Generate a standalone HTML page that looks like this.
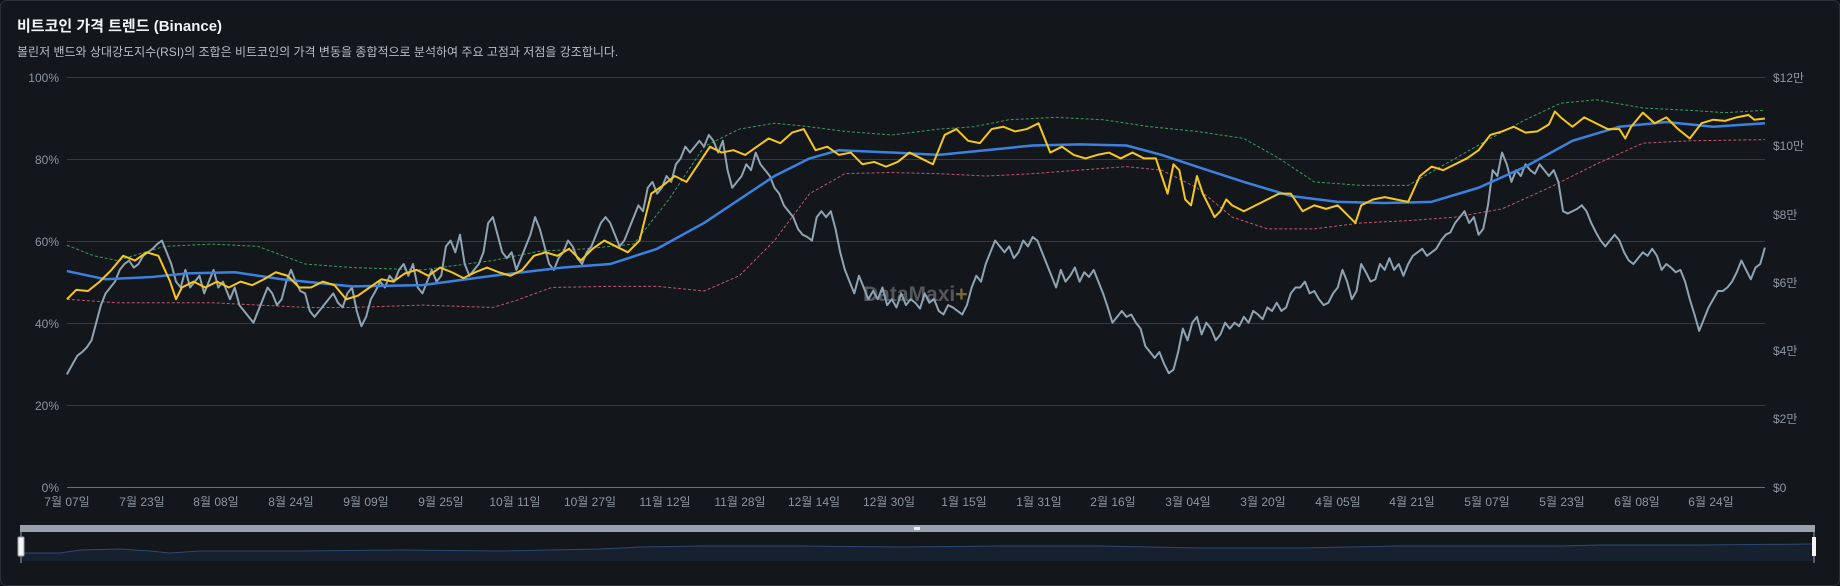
<!DOCTYPE html>
<html><head><meta charset="utf-8"><style>
html,body{margin:0;padding:0;background:#0d1014;width:1840px;height:586px;overflow:hidden}
.card{position:absolute;left:0;top:0;width:1838px;height:584px;border:1px solid #2b3038;border-radius:6px;background:#13161b}
svg{position:absolute;left:0;top:0}
text{font-family:"Liberation Sans","Noto Sans CJK KR",sans-serif}
</style></head><body>
<div class="card"></div>
<svg width="1840" height="586" viewBox="0 0 1840 586">
<text x="17" y="31" font-size="15" font-weight="bold" fill="#f2f4f6">비트코인 가격 트렌드 (Binance)</text>
<text x="17" y="56" font-size="12" fill="#b8bec6">볼린저 밴드와 상대강도지수(RSI)의 조합은 비트코인의 가격 변동을 종합적으로 분석하여 주요 고점과 저점을 강조합니다.</text>
<g stroke="#363b43" stroke-width="1">
<line x1="67" y1="77.5" x2="1765" y2="77.5"/>
<line x1="67" y1="159.5" x2="1765" y2="159.5"/>
<line x1="67" y1="241.5" x2="1765" y2="241.5"/>
<line x1="67" y1="323.5" x2="1765" y2="323.5"/>
<line x1="67" y1="405.5" x2="1765" y2="405.5"/>
<line x1="67" y1="487.5" x2="1765" y2="487.5" stroke="#6b7079"/>
</g>
<g font-size="12" fill="#8d96a0" text-anchor="end">
<text x="59" y="82">100%</text><text x="59" y="164">80%</text><text x="59" y="246">60%</text><text x="59" y="328">40%</text><text x="59" y="410">20%</text><text x="59" y="492">0%</text>
</g>
<g font-size="12" fill="#8d96a0">
<text x="1773" y="82">$12만</text><text x="1773" y="150">$10만</text><text x="1773" y="219">$8만</text><text x="1773" y="287">$6만</text><text x="1773" y="355">$4만</text><text x="1773" y="423">$2만</text><text x="1773" y="492">$0</text>
</g>
<g font-size="12" fill="#8d96a0" text-anchor="middle">
<text x="67" y="506">7월 07일</text><text x="142" y="506">7월 23일</text><text x="216" y="506">8월 08일</text><text x="291" y="506">8월 24일</text><text x="366" y="506">9월 09일</text><text x="441" y="506">9월 25일</text><text x="515" y="506">10월 11일</text><text x="590" y="506">10월 27일</text><text x="665" y="506">11월 12일</text><text x="740" y="506">11월 28일</text><text x="814" y="506">12월 14일</text><text x="889" y="506">12월 30일</text><text x="964" y="506">1월 15일</text><text x="1039" y="506">1월 31일</text><text x="1113" y="506">2월 16일</text><text x="1188" y="506">3월 04일</text><text x="1263" y="506">3월 20일</text><text x="1338" y="506">4월 05일</text><text x="1412" y="506">4월 21일</text><text x="1487" y="506">5월 07일</text><text x="1562" y="506">5월 23일</text><text x="1637" y="506">6월 08일</text><text x="1711" y="506">6월 24일</text>
</g>
<text x="863" y="301" font-size="21" font-weight="bold" fill="#5f6369" opacity="0.85">DataMaxi<tspan fill="#8a7a3a">+</tspan></text>
<g transform="scale(1.17347)" fill="none" stroke-linejoin="round">
<polyline vector-effect="non-scaling-stroke" stroke="#3d9a5a" stroke-width="1" stroke-dasharray="3,2" points="57,209 80,218 100,222 140,210 180,208 220,210 260,225 300,228 360,230 420,222 460,214 500,212 540,208 570,170 600,125 630,110 660,105 690,108 720,112 760,115 800,110 830,108 860,102 900,100 940,102 980,108 1020,112 1060,118 1090,135 1120,155 1160,158 1200,158 1240,135 1270,118 1300,102 1330,88 1360,85 1400,92 1440,94 1470,96 1504,94"/>
<polyline vector-effect="non-scaling-stroke" stroke="#c0566a" stroke-width="1" stroke-dasharray="3,2" points="57,255 100,258 140,258 180,258 220,260 260,262 300,262 360,260 420,262 440,256 470,245 520,244 560,244 600,248 630,235 660,205 690,165 720,148 760,147 800,148 840,150 880,148 920,145 960,142 990,145 1020,160 1050,185 1080,195 1120,195 1160,190 1200,188 1240,185 1280,178 1320,160 1360,140 1400,122 1440,120 1504,119"/>
<polyline vector-effect="non-scaling-stroke" stroke="#8fa3b3" stroke-width="2" points="57,319 62,310 66,303 70,300 74,296 78,290 82,275 86,260 90,250 94,245 98,240 102,230 106,225 110,222 114,228 118,225 122,218 126,215 130,212 134,208 138,205 142,215 146,225 150,240 154,245 158,230 162,245 166,240 170,235 174,250 178,240 182,230 186,245 190,240 196,255 200,245 204,260 208,265 212,270 216,275 220,265 224,255 228,245 232,250 236,260 240,255 244,240 248,230 252,240 256,248 260,250 264,265 268,270 272,265 276,260 280,255 284,250 288,258 292,262 296,250 300,245 304,265 308,278 312,270 316,255 320,248 324,240 328,245 332,235 336,240 340,230 344,225 348,235 352,225 356,245 360,250 364,240 368,230 372,240 376,235 380,210 384,205 388,215 392,200 396,225 400,235 404,230 408,225 412,215 416,190 420,185 424,200 428,215 432,220 436,215 440,230 444,220 448,210 452,200 456,185 460,195 464,210 468,225 472,230 476,220 480,215 484,205 488,210 492,220 496,225 500,215 504,210 508,200 512,190 516,185 520,190 524,200 528,210 532,205 536,195 540,185 544,175 548,180 552,160 556,155 560,165 564,160 568,150 572,155 576,140 580,135 584,125 588,130 592,125 596,120 600,125 604,115 608,120 612,130 616,120 620,145 624,160 628,155 632,150 636,140 640,145 644,130 648,140 652,145 656,150 660,160 664,165 668,175 672,180 676,185 680,195 684,200 688,202 692,205 696,185 700,180 704,185 708,180 712,195 716,215 720,230 724,240 728,250 732,235 736,245 740,255 744,248 748,255 752,245 756,260 760,255 764,262 768,250 772,260 776,255 780,258 784,263 788,250 792,258 796,255 800,265 804,268 808,260 812,262 816,265 820,268 824,260 828,245 832,235 836,240 840,225 844,215 848,205 852,210 856,215 860,210 864,220 868,215 872,205 876,210 880,202 884,205 888,215 892,225 896,235 900,245 904,230 908,240 912,235 916,228 920,240 924,232 928,236 932,230 936,240 940,250 944,262 948,275 952,270 956,265 960,270 964,268 968,275 972,280 976,295 980,300 984,305 988,300 992,310 996,318 1000,315 1004,300 1008,280 1012,290 1016,275 1020,270 1024,285 1028,275 1032,280 1036,290 1040,285 1044,275 1048,280 1052,275 1056,278 1060,270 1064,275 1068,265 1072,268 1076,272 1080,262 1084,265 1088,258 1092,265 1096,262 1100,250 1104,245 1108,245 1112,240 1116,250 1120,248 1124,255 1128,260 1132,258 1136,250 1140,245 1144,230 1148,240 1152,255 1156,248 1160,225 1164,232 1168,240 1172,238 1176,225 1180,230 1184,220 1188,230 1192,225 1196,235 1200,225 1204,218 1208,215 1212,212 1216,218 1220,215 1224,212 1228,205 1232,200 1236,198 1240,190 1244,185 1248,180 1252,190 1256,185 1260,200 1264,195 1268,175 1272,145 1276,150 1280,130 1284,140 1288,155 1292,145 1296,150 1300,140 1304,145 1308,148 1312,140 1316,145 1320,150 1324,145 1328,155 1332,180 1336,182 1340,180 1344,178 1348,175 1352,180 1356,190 1360,198 1364,205 1368,210 1372,205 1376,200 1380,205 1384,215 1388,222 1392,225 1396,220 1400,215 1404,218 1408,212 1412,218 1416,230 1420,225 1424,228 1428,232 1432,230 1436,240 1440,255 1444,268 1448,282 1452,272 1456,262 1460,255 1464,248 1468,248 1472,245 1476,240 1480,232 1484,222 1488,230 1492,238 1496,228 1500,225 1504,211"/>
<polyline vector-effect="non-scaling-stroke" stroke="#3b82e0" stroke-width="2.5" points="57,231 90,238 130,236 160,233 200,232 240,238 300,244 360,243 420,235 480,228 520,225 560,212 600,190 630,170 660,150 690,135 715,128 760,130 800,132 840,128 880,124 920,123 960,124 990,132 1020,142 1060,155 1100,167 1140,172 1180,173 1220,172 1260,160 1300,142 1340,120 1380,108 1420,104 1460,108 1504,105"/>
<polyline vector-effect="non-scaling-stroke" stroke="#f5c81e" stroke-width="2" points="57,255 65,247 75,248 85,240 95,230 105,218 115,222 125,215 135,218 145,240 150,255 155,245 165,240 175,245 185,240 195,245 205,240 215,243 225,238 235,232 245,235 255,245 265,245 275,240 285,243 295,255 305,252 315,245 325,238 335,240 345,233 355,230 365,235 375,228 385,232 395,237 405,232 415,228 425,232 435,235 445,230 455,218 465,215 475,218 485,212 495,222 505,212 515,205 525,210 535,215 545,205 555,165 565,158 575,150 585,155 595,140 605,125 615,130 625,128 635,132 645,125 655,118 665,122 675,113 685,110 695,128 705,125 715,132 725,130 735,140 745,138 755,142 765,138 775,130 785,135 795,140 805,115 815,110 825,120 835,122 845,110 855,108 865,112 875,110 885,105 895,130 905,125 915,132 925,135 935,132 945,130 955,135 965,130 975,135 985,135 990,150 995,165 1000,140 1005,145 1010,170 1015,175 1020,150 1025,165 1030,175 1035,185 1040,180 1045,170 1050,175 1060,180 1070,175 1080,170 1090,165 1100,165 1110,180 1120,175 1130,178 1140,175 1150,185 1155,190 1160,175 1170,170 1180,168 1190,170 1200,172 1210,150 1220,142 1230,145 1240,140 1250,135 1260,128 1270,115 1280,112 1290,108 1300,113 1310,112 1320,106 1325,95 1330,100 1340,108 1350,100 1360,105 1370,110 1380,110 1385,118 1390,108 1400,96 1410,105 1420,100 1430,110 1440,118 1450,105 1460,102 1470,103 1480,100 1490,98 1495,102 1504,101"/>
</g>
<rect x="20" y="525" width="1795" height="7" fill="#9aa1ae"/>
<rect x="914" y="527" width="6" height="3" fill="#f0f0f0"/>
<path d="M21,553 L60,553 L80,550 L120,549 L150,551 L170,553 L200,551 L300,551 L400,550 L500,551 L600,549 L640,547 L700,546 L800,546 L900,547 L1000,546 L1100,546 L1200,548 L1300,548 L1400,546 L1500,546 L1560,546 L1600,545 L1700,545 L1814,544 L1814,561 L21,561 Z" fill="#17202e" stroke="none"/>
<polyline points="21,553 60,553 80,550 120,549 150,551 170,553 200,551 300,551 400,550 500,551 600,549 640,547 700,546 800,546 900,547 1000,546 1100,546 1200,548 1300,548 1400,546 1500,546 1560,546 1600,545 1700,545 1814,544" fill="none" stroke="#2a4a72" stroke-width="1"/>
<line x1="21" y1="532" x2="21" y2="563" stroke="#9aa1ae" stroke-width="1"/>
<rect x="18" y="537" width="6" height="19" rx="1" fill="#f4f4f4" stroke="#9aa1ae"/>
<line x1="1814" y1="532" x2="1814" y2="563" stroke="#9aa1ae" stroke-width="1"/>
<rect x="1812" y="537" width="4" height="19" fill="#f4f4f4"/>
</svg>
</body></html>
